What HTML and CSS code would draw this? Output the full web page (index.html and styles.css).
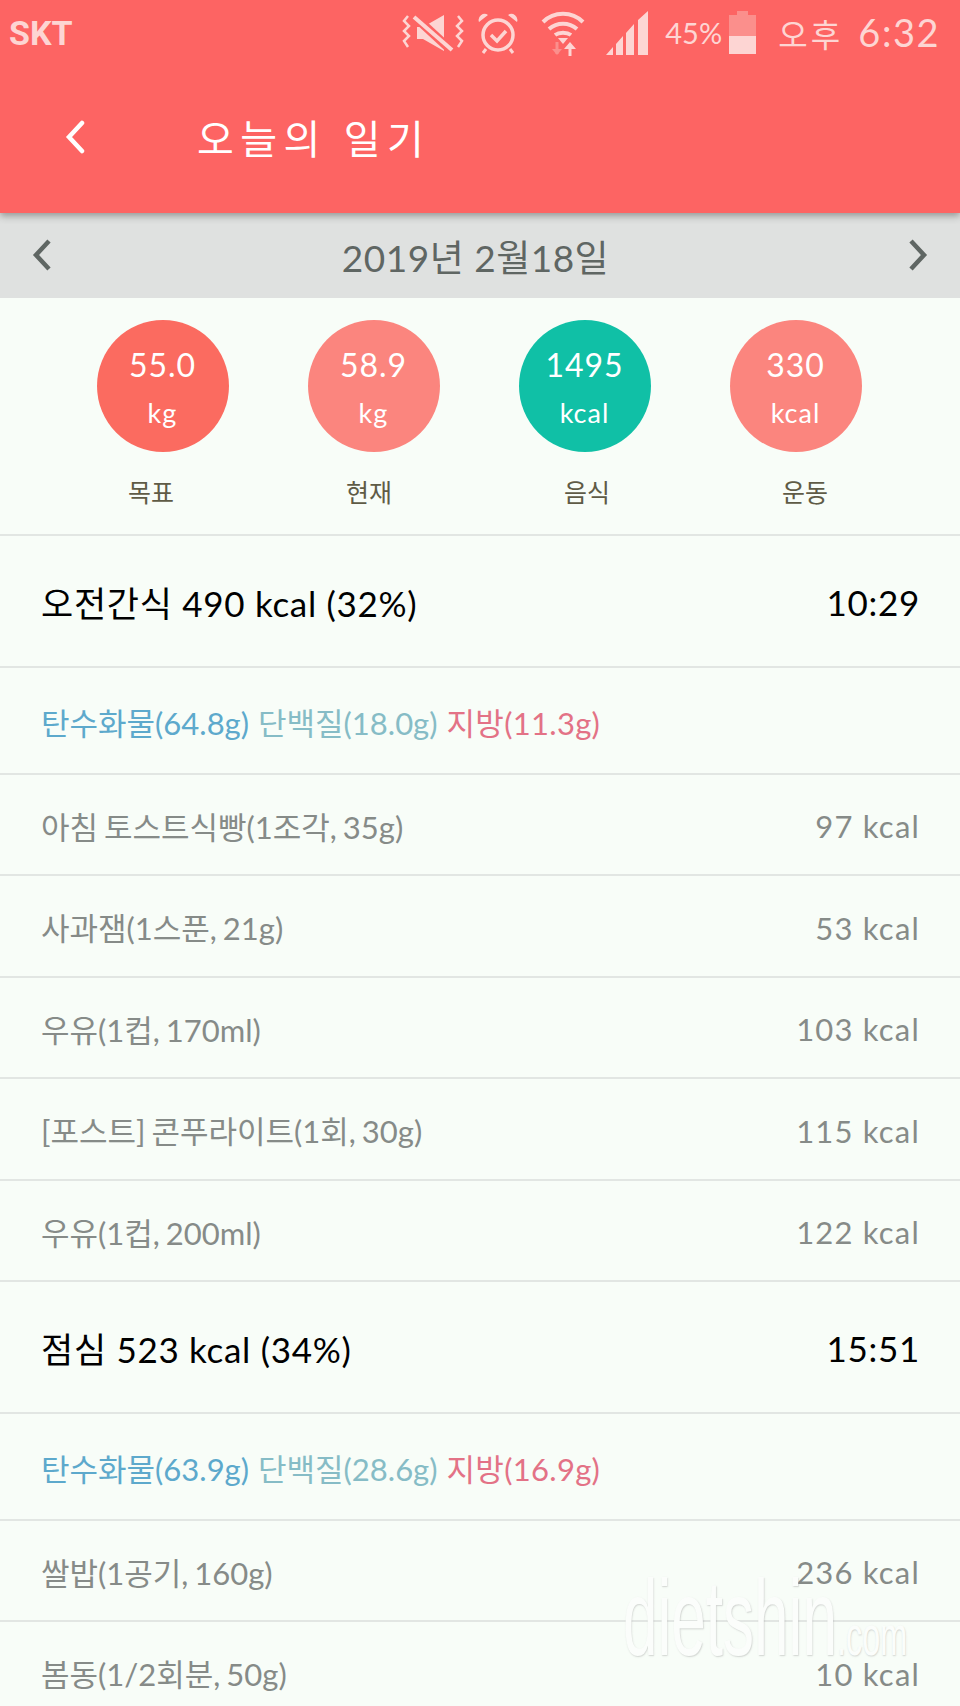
FILE: index.html
```html
<!DOCTYPE html>
<html lang="ko">

<head>
    <meta charset="UTF-8">
    <meta name="viewport" content="width=device-width, initial-scale=1.0">
    <title>오늘의 일기</title>
    <link rel="stylesheet" href="styles.css">
</head>

<body>
    <header class="top">
        <div class="status">
            <span class="carrier">SKT</span>
            <svg class="ic-mute" viewBox="0 0 62 40" fill="none" stroke="#fdd5d3">
                <path d="M6 3l-4 5 5 5-5 5 5 5-5 5 4 6M56 3l4 5-5 5 5 5-5 5 5 5-4 6" stroke-width="2.5"/>
                <path d="M15 14h6L42 2v36L21 26h-6z" fill="#fdd5d3" stroke="none"/>
                <path d="M12 3l38 35" stroke="#fd6463" stroke-width="9"/>
                <path d="M12 4l38 33" stroke-width="4"/>
            </svg>
            <svg class="ic-alarm" viewBox="0 0 42 42" fill="none" stroke="#fdd5d3" stroke-width="3.5">
                <circle cx="21" cy="23" r="15"/>
                <path d="M14 23l6 6 9-10"/>
                <path d="M2 10a6 6 0 0 1 9-7zM40 10a6 6 0 0 0-9-7z" fill="#fdd5d3" stroke="none"/>
                <path d="M9 37l-3 4M33 37l3 4" stroke-width="3"/>
            </svg>
            <svg class="ic-wifi" viewBox="0 0 44 46" fill="none" stroke="#fdd5d3" stroke-width="4">
                <path d="M2 12c11-11 29-11 40 0M8 19c8-7 20-7 28 0M14 25c4-3 12-3 16 0"/>
                <path d="M17 28h10l-5 6z" fill="#fdd5d3" stroke="none"/>
                <path d="M16 32v12" stroke="#fb8f8c" stroke-width="3"/>
                <path d="M11 39l5 6 5-6z" fill="#fb8f8c" stroke="none"/>
                <path d="M29 34v12" stroke-width="3"/>
                <path d="M23 39l6-7 6 7z" fill="#fdd5d3" stroke="none"/>
            </svg>
            <svg class="ic-signal" viewBox="0 0 44 44" fill="#fdd5d3">
                <path d="M0 44l7-8v8zM10 33l7-8v19h-7zM20 22l8-9v31h-8zM32 9l10-9v44H32z"/>
            </svg>
            <span class="pct">45%</span>
            <svg class="ic-batt" viewBox="0 0 27 43">
                <path d="M8 0h11v4h8v21H0V4h8z" fill="#fb8f8c"/>
                <path d="M0 25h27v18H0z" fill="#fdd5d3"/>
            </svg>
            <span class="clock"><span class="ampm">오후</span> 6:32</span>
        </div>
        <div class="appbar">
            <svg class="back" viewBox="0 0 20 34" fill="none" stroke="#fff" stroke-width="4.5" stroke-linecap="round">
                <path d="M17 3L4 17l13 14"/>
            </svg>
            <h1 class="title">오늘의 일기</h1>
        </div>
    </header>

    <div class="datebar">
        <svg class="arrow" viewBox="0 0 20 34" fill="none" stroke="#5f6663" stroke-width="4.5">
            <path d="M17 3L4 17l13 14"/>
        </svg>
        <span class="date">2019년 2월18일</span>
        <svg class="arrow" viewBox="0 0 20 34" fill="none" stroke="#5f6663" stroke-width="4.5">
            <path d="M3 3l13 14L3 31"/>
        </svg>
    </div>

    <section class="summary">
        <div class="circles">
            <div class="circle c-goal"><span>55.0</span><span>kg</span></div>
            <div class="circle c-soft"><span>58.9</span><span>kg</span></div>
            <div class="circle c-food"><span>1495</span><span>kcal</span></div>
            <div class="circle c-soft"><span>330</span><span>kcal</span></div>
        </div>
        <div class="labels">
            <span>목표</span>
            <span>현재</span>
            <span>음식</span>
            <span>운동</span>
        </div>
    </section>

    <main class="list">
        <div class="row meal"><span>오전간식 490 kcal (32%)</span><span>10:29</span></div>
        <div class="row macro">
            <span class="carb">탄수화물(64.8g)</span>
            <span class="prot">단백질(18.0g)</span>
            <span class="fat">지방(11.3g)</span>
        </div>
        <div class="row item"><span>아침 토스트식빵(1조각, 35g)</span><span class="kcal">97 kcal</span></div>
        <div class="row item"><span>사과잼(1스푼, 21g)</span><span class="kcal">53 kcal</span></div>
        <div class="row item"><span>우유(1컵, 170ml)</span><span class="kcal">103 kcal</span></div>
        <div class="row item"><span>[포스트] 콘푸라이트(1회, 30g)</span><span class="kcal">115 kcal</span></div>
        <div class="row item"><span>우유(1컵, 200ml)</span><span class="kcal">122 kcal</span></div>
        <div class="row meal"><span>점심 523 kcal (34%)</span><span>15:51</span></div>
        <div class="row macro">
            <span class="carb">탄수화물(63.9g)</span>
            <span class="prot">단백질(28.6g)</span>
            <span class="fat">지방(16.9g)</span>
        </div>
        <div class="row item"><span>쌀밥(1공기, 160g)</span><span class="kcal">236 kcal</span></div>
        <div class="row item"><span>봄동(1/2회분, 50g)</span><span class="kcal">10 kcal</span></div>
    </main>

    <div class="watermark">dietshin<small>.com</small></div>
</body>

</html>
```

FILE: styles.css
```css
* {
    box-sizing: border-box;
}

body {
    margin: 0;
    height: 1706px;
    overflow: hidden;
    position: relative;
    background: #f8fdf8;
    font-family: "Lato", "Noto Sans CJK KR", sans-serif;
    color: #868b88;
}

.top {
    height: 213px;
    background: #fd6463;
    box-shadow: 0 3px 7px rgba(60, 60, 60, 0.45);
    position: relative;
}

.status {
    height: 65px;
    display: flex;
    align-items: center;
    padding: 0 20px 0 9px;
    color: #fdd5d3;
}

.carrier {
    font-family: "Roboto", sans-serif;
    font-weight: 700;
    font-size: 34px;
    margin-right: auto;
}

.ic-mute {
    width: 62px;
    height: 40px;
    margin-right: 13px;
}

.ic-alarm {
    width: 42px;
    height: 42px;
    margin-right: 22px;
}

.ic-wifi {
    width: 44px;
    height: 46px;
    margin-right: 21px;
}

.ic-signal {
    width: 44px;
    height: 44px;
    margin-right: 15px;
}

.pct {
    font-size: 29px;
    width: 55px;
    margin-right: 9px;
    white-space: nowrap;
}

.ic-batt {
    width: 27px;
    height: 43px;
    margin-right: 22px;
}

.clock {
    font-size: 38px;
    letter-spacing: 1.5px;
    white-space: nowrap;
}

.ampm {
    font-size: 32px;
    letter-spacing: 3px;
    margin-right: 4px;
}

.appbar {
    height: 148px;
    display: flex;
    align-items: center;
    padding: 0 0 4px 65px;
}

.back {
    width: 20px;
    height: 34px;
}

.title {
    margin: 0 0 0 112px;
    font-size: 40px;
    font-weight: 400;
    letter-spacing: 6.5px;
    color: #fff;
}

.datebar {
    height: 85px;
    background: #dfe1e0;
    display: flex;
    align-items: center;
    justify-content: space-between;
    padding: 0 32px;
}

.arrow {
    width: 20px;
    height: 34px;
    margin-top: -1px;
}

.date {
    font-size: 37px;
    letter-spacing: 0.5px;
    color: #5f6663;
    margin-left: -9px;
}

.summary {
    height: 238px;
    padding-top: 22px;
    border-bottom: 2px solid #e2e6e3;
}

.circles {
    display: grid;
    grid-template-columns: repeat(4, 211px);
    padding-left: 57px;
}

.circle {
    width: 132px;
    height: 132px;
    padding-top: 6px;
    border-radius: 50%;
    justify-self: center;
    display: flex;
    flex-direction: column;
    align-items: center;
    justify-content: center;
    gap: 12px;
    color: #fff;
    font-size: 32px;
    letter-spacing: 1px;
    line-height: 36px;
}

.circle span:last-child {
    font-size: 27px;
}

.c-goal {
    background: #fb6b60;
}

.c-soft {
    background: #fb857e;
}

.c-food {
    background: #10c0a6;
}

.labels {
    display: grid;
    grid-template-columns: repeat(4, 218px);
    padding-left: 42px;
    margin-top: 22px;
    font-size: 25px;
    line-height: 36px;
    text-align: center;
    color: #5f5b46;
}

.row {
    display: flex;
    justify-content: space-between;
    align-items: center;
    padding: 2px 40px 0 41px;
    border-bottom: 2px solid #e2e6e3;
    white-space: nowrap;
}

.meal {
    height: 131.5px;
    font-size: 35px;
    letter-spacing: 0.7px;
    color: #000;
}

.macro {
    height: 107px;
    justify-content: flex-start;
    gap: 9px;
    font-size: 31px;
}

.item {
    height: 101.5px;
    font-size: 31px;
    word-spacing: -2px;
}

.kcal {
    margin-top: 2px;
    letter-spacing: 1.2px;
    word-spacing: 0;
}

.carb {
    color: #5da9cc;
}

.prot {
    color: #86bcc6;
}

.fat {
    letter-spacing: 0.3px;
    color: #e37286;
}

/* faint site stamp over the bottom corner */
.watermark {
    position: absolute;
    left: 623px;
    top: 1563px;
    font-family: "Liberation Sans", sans-serif;
    font-size: 107px;
    line-height: 110px;
    color: #fbfdfb;
    text-shadow: 1px 1px 2px rgba(120, 120, 120, 0.3);
    white-space: nowrap;
    transform: scaleX(0.58);
    transform-origin: left top;
}

.watermark small {
    font-size: 56px;
}
```
